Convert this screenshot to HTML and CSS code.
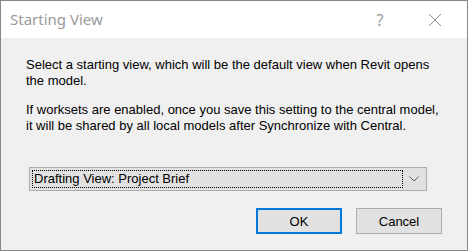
FILE: index.html
```html
<!DOCTYPE html>
<html lang="en">
<head>
    <meta charset="UTF-8">
    <meta name="viewport" content="width=device-width, initial-scale=1.0">
    <title>Starting View</title>
    <link rel="stylesheet" href="styles.css">
</head>
<body>
    <div class="dialog">
        <div class="titlebar">
            <span class="title">Starting View</span>
            <span class="help">?</span>
            <span class="close">
                <svg width="14" height="14" viewBox="0 0 14 14">
                    <path d="M1 1 L13 13 M13 1 L1 13" stroke="#8a8a8a" stroke-width="1" fill="none"/>
                </svg>
            </span>
        </div>
        <div class="content">
            <p>Select a starting view, which will be the default view when Revit opens the model.</p>
            <p>If worksets are enabled, once you save this setting to the central model, it will be shared by all local models after Synchronize with Central.</p>

            <div class="combo">
                <div class="combo-value">Drafting View: Project Brief</div>
                <div class="combo-arrow">
                    <svg width="10" height="6" viewBox="0 0 10 6">
                        <path d="M0.5 0.5 L5 5 L9.5 0.5" stroke="#606060" stroke-width="1" fill="none"/>
                    </svg>
                </div>
            </div>

            <div class="buttons">
                <button type="button" class="btn default">OK</button>
                <button type="button" class="btn">Cancel</button>
            </div>
        </div>
    </div>
</body>
</html>
```

FILE: styles.css
```css
html, body {
    margin: 0;
    padding: 0;
    background: #f0f0f0;
}
.dialog {
    width: 468px;
    height: 251px;
    box-sizing: border-box;
    border: 1px solid #888;
    background: #f0f0f0;
    font-family: "Liberation Sans", Arial, sans-serif;
    font-size: 13px;
    color: #000;
}
.titlebar {
    height: 37px;
    background: #fff;
    display: flex;
    align-items: center;
    padding-left: 9px;
}
.title {
    font-family: "Noto Sans", sans-serif;
    font-size: 15px;
    color: #9a9a9a;
    flex: 1;
    margin-top: -1px;
}
.help {
    font-family: "Noto Sans", sans-serif;
    font-size: 16px;
    color: #9a9a9a;
    width: 46px;
    text-align: center;
    margin-right: 4px;
}
.close {
    width: 56px;
    display: flex;
    justify-content: center;
    padding-right: 4px;
}
.content {
    padding: 19px 25px 0 25px;
}
.content p {
    margin: 0 0 13px;
    line-height: 16px;
}
.combo {
    margin: 33px 15px 0 3px;
    height: 24px;
    box-sizing: border-box;
    border: 1px solid #adadad;
    background: #e1e1e1;
    display: flex;
    align-items: center;
    padding: 2px;
}
.combo-value {
    flex: 1;
    height: 18px;
    box-sizing: border-box;
    border: 1px dotted #000;
    padding-left: 1px;
    line-height: 16px;
}
.combo-arrow {
    width: 20px;
    display: flex;
    justify-content: center;
    padding-left: 1px;
}
.buttons {
    display: flex;
    justify-content: flex-end;
    gap: 14px;
    margin-top: 17px;
}
.btn {
    width: 86px;
    height: 26px;
    box-sizing: border-box;
    border: 1px solid #adadad;
    background: #e1e1e1;
    font-family: "Liberation Sans", Arial, sans-serif;
    font-size: 13px;
    color: #000;
    padding: 0;
}
.btn.default {
    border: 2px solid #0078d7;
}
```
